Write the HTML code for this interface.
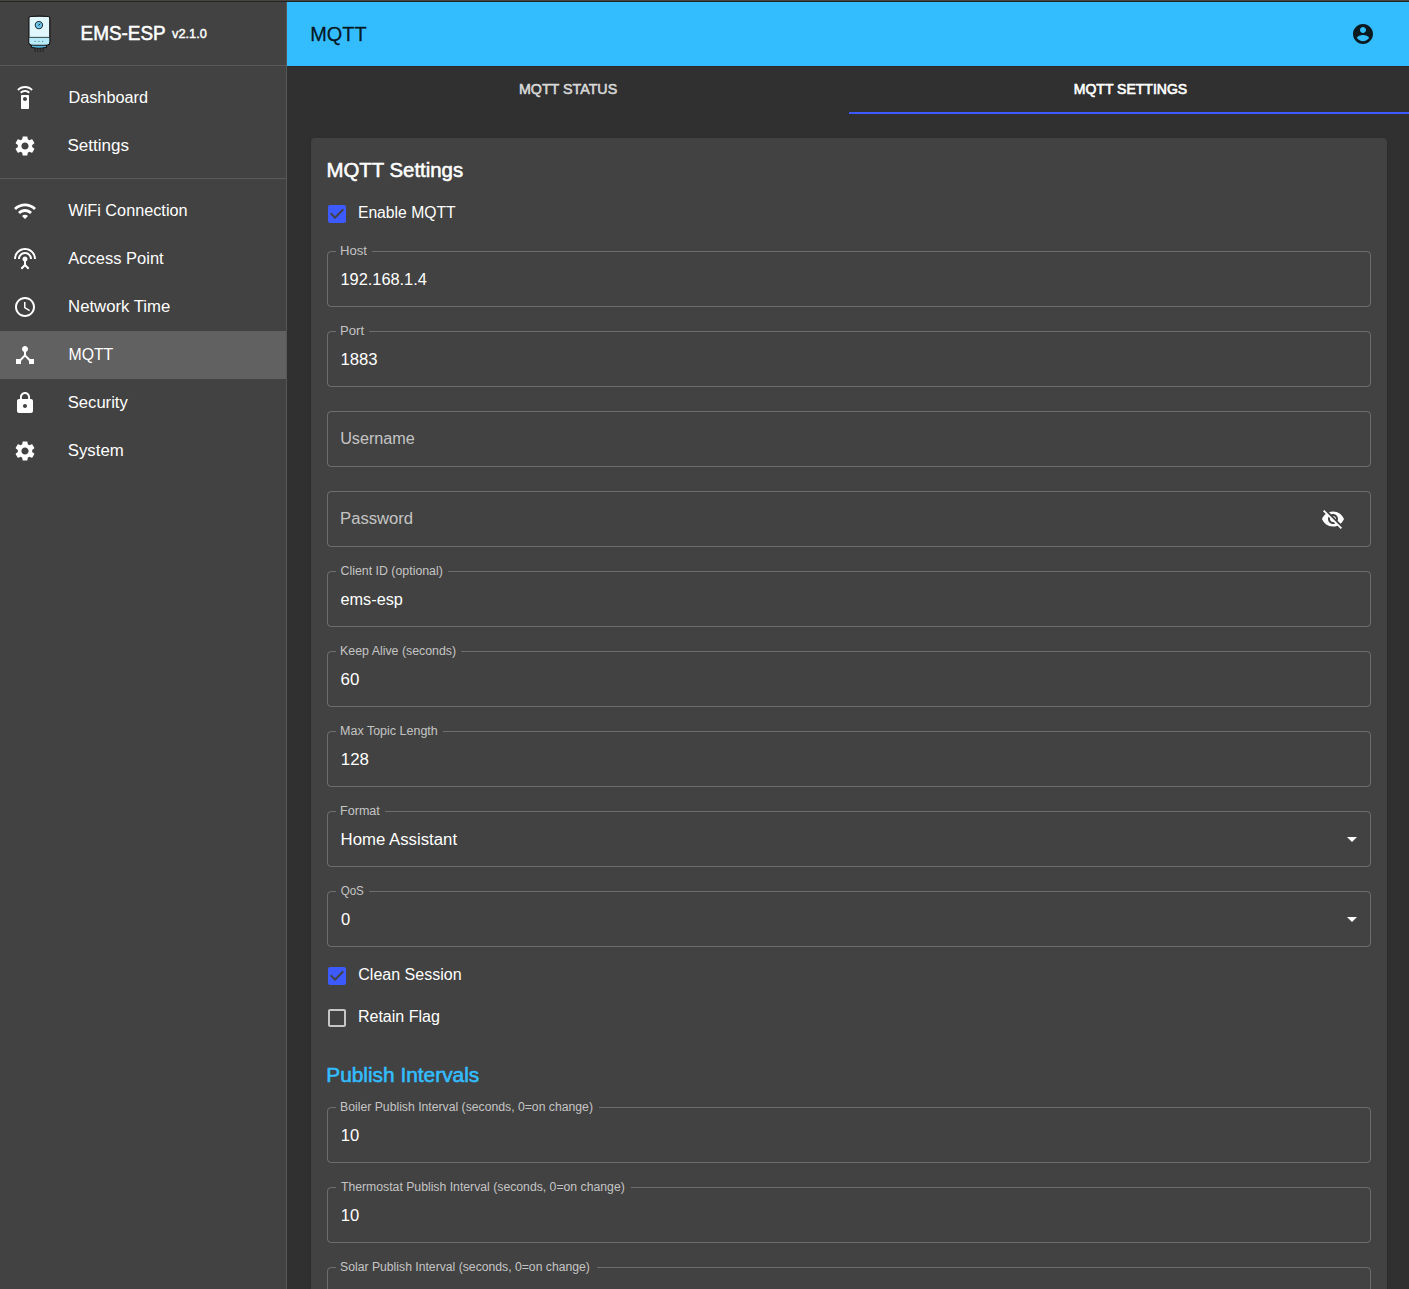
<!DOCTYPE html>
<html><head><meta charset="utf-8"><title>EMS-ESP MQTT</title>
<style>
html,body{margin:0;padding:0;}
body{width:1409px;height:1289px;overflow:hidden;position:relative;background:#303030;font-family:"Liberation Sans",sans-serif;}
.t{position:absolute;white-space:nowrap;}
.r{position:absolute;}
.i{position:absolute;display:block;}
.fld{position:absolute;box-sizing:border-box;border:1px solid rgba(255,255,255,0.23);border-radius:4px;}
</style></head><body>
<div class="r" style="left:0px;top:0px;width:1409px;height:1px;background:#46453f;"></div>
<div class="r" style="left:0px;top:1px;width:1409px;height:1px;background:#232323;"></div>
<div class="r" style="left:0px;top:2px;width:286px;height:1287px;background:#424242;"></div>
<div class="r" style="left:286px;top:2px;width:1px;height:1287px;background:#575757;"></div>
<div class="r" style="left:0px;top:65px;width:286px;height:1px;background:#595959;"></div>
<svg class="i" style="left:24px;top:12px;width:32px;height:44px" viewBox="0 0 32 44">
 <path d="M7.4 32.3 H22.4 V35.3 Q15 37.1 7.4 35.3 Z" fill="#5ab3d9" stroke="#141414" stroke-width="1.1"/>
 <rect x="10.4" y="36.2" width="1.2" height="3.7" fill="#262626"/><rect x="13" y="36.2" width="1.2" height="3.7" fill="#262626"/><rect x="15.8" y="36.2" width="1.2" height="3.7" fill="#262626"/><rect x="18.5" y="36.2" width="1.2" height="3.7" fill="#262626"/>
 <path d="M4.9 6.2 Q4.9 4.6 6.5 4.5 Q15.3 3.9 24.2 4.5 Q25.8 4.6 25.8 6.2 V30.6 Q25.8 32.6 23.8 32.8 Q15.3 33.2 6.9 32.8 Q4.9 32.6 4.9 30.6 Z" fill="#dff7fd" stroke="#141414" stroke-width="1.25"/>
 <path d="M5.55 25.9 H25.15 V30.6 Q25.15 32.1 23.7 32.2 Q15.3 32.6 7 32.2 Q5.55 32.1 5.55 30.6 Z" fill="#b5ebfa"/>
 <line x1="5.2" y1="25.4" x2="25.5" y2="25.4" stroke="#3b4b50" stroke-width="1.05"/>
 <circle cx="14.9" cy="13.1" r="3.65" fill="#74c9ec" stroke="#26353b" stroke-width="1.1"/>
 <circle cx="14.9" cy="13.1" r="2" fill="#62bde6"/>
 <line x1="14.6" y1="13.4" x2="16.2" y2="11.7" stroke="#101010" stroke-width="0.9"/>
 <rect x="10.5" y="28.9" width="1.3" height="0.9" fill="#5d7a83"/><rect x="14.3" y="28.9" width="1.3" height="0.9" fill="#5d7a83"/><rect x="17.9" y="28.9" width="1.3" height="0.9" fill="#5d7a83"/>
</svg>
<div class="t" style="left:81.7px;top:24.28px;font-size:19.4px;line-height:19px;color:#fff;font-weight:400;-webkit-text-stroke:0.53px #fff;transform:translate(-1.44px,0) scaleX(0.9749);transform-origin:1.45px 0;">EMS-ESP</div>
<div class="t" style="left:172.1px;top:27.00px;font-size:13px;line-height:13px;color:#fff;font-weight:400;-webkit-text-stroke:0.45px #fff;transform:translate(-0.00px,0) scaleX(0.9857);transform-origin:0.01px 0;">v2.1.0</div>
<svg class="i" style="left:13px;top:86px;width:24px;height:24px" viewBox="0 0 24 24"><path fill="#fff" d="M15 9H9c-.55 0-1 .45-1 1v12c0 .55.45 1 1 1h6c.55 0 1-.45 1-1V10c0-.55-.45-1-1-1zm-3 6c-1.1 0-2-.9-2-2s.9-2 2-2 2 .9 2 2-.9 2-2 2zM7.05 6.05l1.41 1.41C9.37 6.56 10.62 6 12 6s2.63.56 3.54 1.46l1.41-1.41C15.68 4.78 13.93 4 12 4s-3.68.78-4.95 2.05zM12 0C8.96 0 6.21 1.23 4.22 3.22l1.41 1.41C7.26 3.01 9.51 2 12 2s4.74 1.01 6.36 2.64l1.41-1.41C17.79 1.23 15.04 0 12 0z"/></svg>
<div class="t" style="left:69.3px;top:89.66px;font-size:16px;line-height:16px;color:#fff;font-weight:400;transform:translate(-0.53px,0) scaleX(1.0160);transform-origin:1.24px 0;">Dashboard</div>
<svg class="i" style="left:13px;top:134px;width:24px;height:24px" viewBox="0 0 24 24"><path fill="#fff" d="M19.14 12.94c.04-.3.06-.61.06-.94 0-.32-.02-.64-.07-.94l2.03-1.58c.18-.14.23-.41.12-.61l-1.92-3.32c-.12-.22-.37-.29-.59-.22l-2.39.96c-.5-.38-1.03-.7-1.62-.94l-.36-2.54c-.04-.24-.24-.41-.48-.41h-3.84c-.24 0-.43.17-.47.41l-.36 2.54c-.59.24-1.13.57-1.62.94l-2.39-.96c-.22-.08-.47 0-.59.22L2.74 8.87c-.12.21-.08.47.12.61l2.03 1.58c-.05.3-.09.63-.09.94s.02.64.07.94l-2.03 1.58c-.18.14-.23.41-.12.61l1.92 3.32c.12.22.37.29.59.22l2.39-.96c.5.38 1.03.7 1.62.94l.36 2.54c.05.24.24.41.48.41h3.84c.24 0 .44-.17.47-.41l.36-2.54c.59-.24 1.13-.56 1.62-.94l2.39.96c.22.08.47 0 .59-.22l1.92-3.32c.12-.22.07-.47-.12-.61l-2.01-1.58zM12 15.6c-1.98 0-3.6-1.62-3.6-3.6s1.62-3.6 3.6-3.6 3.6 1.62 3.6 3.6-1.62 3.6-3.6 3.6z"/></svg>
<div class="t" style="left:69.3px;top:137.66px;font-size:16px;line-height:16px;color:#fff;font-weight:400;transform:translate(-1.42px,0) scaleX(1.0636);transform-origin:0.92px 0;">Settings</div>
<svg class="i" style="left:13px;top:199px;width:24px;height:24px" viewBox="0 0 24 24"><path fill="#fff" d="M1 9l2 2c4.97-4.97 13.03-4.97 18 0l2-2C16.93 2.93 7.08 2.93 1 9zm8 8l3 3 3-3c-1.65-1.66-4.34-1.66-6 0zm-4-4l2 2c2.76-2.76 7.24-2.76 10 0l2-2C15.14 9.14 8.87 9.14 5 13z"/></svg>
<div class="t" style="left:69.3px;top:202.66px;font-size:16px;line-height:16px;color:#fff;font-weight:400;transform:translate(-0.64px,0) scaleX(1.0157);transform-origin:0.15px 0;">WiFi Connection</div>
<svg class="i" style="left:13px;top:247px;width:24px;height:24px" viewBox="0 0 24 24"><path fill="#fff" d="M12 5c-3.87 0-7 3.13-7 7h2c0-2.76 2.24-5 5-5s5 2.24 5 5h2c0-3.87-3.13-7-7-7zm1 9.29c.88-.39 1.5-1.26 1.5-2.29 0-1.38-1.12-2.5-2.5-2.5S9.5 10.62 9.5 12c0 1.02.62 1.9 1.5 2.29v3.3L7.590 21 9 22.41l3-3 3 3L16.41 21 13 17.59v-3.3zM12 1C5.93 1 1 5.930 1 12h2c0-4.97 4.03-9 9-9s9 4.03 9 9h2c0-6.07-4.93-11-11-11z"/></svg>
<div class="t" style="left:69.3px;top:250.66px;font-size:16px;line-height:16px;color:#fff;font-weight:400;transform:translate(-0.64px,0) scaleX(1.0305);transform-origin:0.15px 0;">Access Point</div>
<svg class="i" style="left:13px;top:295px;width:24px;height:24px" viewBox="0 0 24 24"><path fill="#fff" d="M11.99 2C6.47 2 2 6.48 2 12s4.47 10 9.99 10C17.52 22 22 17.52 22 12S17.52 2 11.99 2zM12 20c-4.42 0-8-3.58-8-8s3.58-8 8-8 8 3.58 8 8-3.58 8-8 8zM12.5 7H11v6l5.25 3.15.75-1.23-4.5-2.67z"/></svg>
<div class="t" style="left:69.3px;top:298.66px;font-size:16px;line-height:16px;color:#fff;font-weight:400;transform:translate(-0.83px,0) scaleX(1.0443);transform-origin:1.24px 0;">Network Time</div>
<div class="r" style="left:0px;top:331px;width:286px;height:48px;background:#616161;"></div>
<svg class="i" style="left:13px;top:343px;width:24px;height:24px" viewBox="0 0 24 24"><path fill="#fff" d="M17 16l-4-4V8.82C14.16 8.4 15 7.3 15 6c0-1.66-1.34-3-3-3S9 4.34 9 6c0 1.3.84 2.4 2 2.82V12l-4 4H3v5h5v-3.05l4-4.2 4 4.2V21h5v-5h-4z"/></svg>
<div class="t" style="left:69.3px;top:346.66px;font-size:16px;line-height:16px;color:#fff;font-weight:400;transform:translate(-0.53px,0) scaleX(0.9882);transform-origin:1.24px 0;">MQTT</div>
<svg class="i" style="left:13px;top:391px;width:24px;height:24px" viewBox="0 0 24 24"><path fill="#fff" d="M18 8h-1V6c0-2.76-2.24-5-5-5S7 3.24 7 6v2H6c-1.1 0-2 .9-2 2v10c0 1.1.9 2 2 2h12c1.1 0 2-.9 2-2V10c0-1.1-.9-2-2-2zm-6 9c-1.1 0-2-.9-2-2s.9-2 2-2 2 .9 2 2-.9 2-2 2zm3.1-9H8.9V6c0-1.71 1.39-3.1 3.1-3.1 1.71 0 3.1 1.39 3.1 3.1v2z"/></svg>
<div class="t" style="left:69.3px;top:394.66px;font-size:16px;line-height:16px;color:#fff;font-weight:400;transform:translate(-1.22px,0) scaleX(1.0386);transform-origin:0.92px 0;">Security</div>
<svg class="i" style="left:13px;top:439px;width:24px;height:24px" viewBox="0 0 24 24"><path fill="#fff" d="M19.14 12.94c.04-.3.06-.61.06-.94 0-.32-.02-.64-.07-.94l2.03-1.58c.18-.14.23-.41.12-.61l-1.92-3.32c-.12-.22-.37-.29-.59-.22l-2.39.96c-.5-.38-1.03-.7-1.62-.94l-.36-2.54c-.04-.24-.24-.41-.48-.41h-3.84c-.24 0-.43.17-.47.41l-.36 2.54c-.59.24-1.13.57-1.62.94l-2.39-.96c-.22-.08-.47 0-.59.22L2.74 8.87c-.12.21-.08.47.12.61l2.03 1.58c-.05.3-.09.63-.09.94s.02.64.07.94l-2.03 1.58c-.18.14-.23.41-.12.61l1.92 3.32c.12.22.37.29.59.22l2.39-.96c.5.38 1.03.7 1.62.94l.36 2.54c.05.24.24.41.48.41h3.84c.24 0 .44-.17.47-.41l.36-2.54c.59-.24 1.13-.56 1.62-.94l2.39.96c.22.08.47 0 .59-.22l1.92-3.32c.12-.22.07-.47-.12-.61l-2.01-1.58zM12 15.6c-1.98 0-3.6-1.62-3.6-3.6s1.62-3.6 3.6-3.6 3.6 1.62 3.6 3.6-1.62 3.6-3.6 3.6z"/></svg>
<div class="t" style="left:69.3px;top:442.66px;font-size:16px;line-height:16px;color:#fff;font-weight:400;transform:translate(-1.22px,0) scaleX(1.0496);transform-origin:0.92px 0;">System</div>
<div class="r" style="left:0px;top:178px;width:286px;height:1px;background:#595959;"></div>
<div class="r" style="left:287px;top:2px;width:1122px;height:64px;background:#33bdff;"></div>
<div class="r" style="left:287px;top:66px;width:1122px;height:1px;background:#2e2a29;"></div>
<div class="t" style="left:312px;top:24.07px;font-size:20px;line-height:20px;color:rgba(0,0,0,0.87);font-weight:400;-webkit-text-stroke:0.3px rgba(0,0,0,0.87);transform:translate(-1.77px,0) scaleX(0.9939);transform-origin:1.67px 0;">MQTT</div>
<svg class="i" style="left:1351px;top:22px;width:24px;height:24px" viewBox="0 0 24 24"><path fill="#0b1a20" d="M12 2C6.48 2 2 6.48 2 12s4.48 10 10 10 10-4.48 10-10S17.52 2 12 2zm0 3c1.66 0 3 1.34 3 3s-1.34 3-3 3-3-1.34-3-3 1.34-3 3-3zm0 14.2c-2.5 0-4.71-1.28-6-3.22.03-1.99 4-3.08 6-3.08 1.99 0 5.97 1.09 6 3.08-1.29 1.94-3.5 3.22-6 3.22z"/></svg>
<div class="t" style="left:367.5px;width:400px;text-align:center;top:82.45px;font-size:14px;line-height:14px;color:rgba(255,255,255,0.7);font-weight:400;-webkit-text-stroke:0.65px rgba(255,255,255,0.7);transform:translate(-0.81px,0) scaleX(1.0182);transform-origin:152.71px 0;">MQTT STATUS</div>
<div class="t" style="left:928.5px;width:400px;text-align:center;top:82.15px;font-size:14px;line-height:14px;color:#fff;font-weight:400;-webkit-text-stroke:0.65px #fff;transform:translate(1.42px,0) scaleX(1.0013);transform-origin:143.98px 0;">MQTT SETTINGS</div>
<div class="r" style="left:849px;top:112px;width:560px;height:2px;background:#3d5afe;"></div>
<div class="r" style="left:311px;top:138px;width:1076px;height:1200px;background:#424242;border-radius:4px;box-shadow:0px 2px 1px -1px rgba(0,0,0,0.2),0px 1px 1px 0px rgba(0,0,0,0.14),0px 1px 3px 0px rgba(0,0,0,0.12);"></div>
<div class="t" style="left:327.7px;top:160.78px;font-size:19.4px;line-height:19px;color:#fff;font-weight:400;-webkit-text-stroke:0.53px #fff;transform:translate(-1.44px,0) scaleX(1.0506);transform-origin:1.45px 0;">MQTT Settings</div>
<div class="r" style="left:328px;top:205px;width:18px;height:18px;background:#3d5afe;border-radius:2px;"></div>
<svg class="i" style="left:325px;top:202px;width:24px;height:24px" viewBox="0 0 24 24"><path fill="#424242" d="M10 17l-5-5 1.41-1.41L10 14.17l7.59-7.59L19 8l-9 9z"/></svg>
<div class="t" style="left:358.6px;top:205.16px;font-size:16px;line-height:16px;color:#fff;font-weight:400;transform:translate(-1.12px,0) scaleX(0.9818);transform-origin:1.13px 0;">Enable MQTT</div>
<div class="fld" style="left:327px;top:251px;width:1044px;height:56px;"></div>
<div class="r" style="left:336px;top:251px;width:36px;height:1px;background:#424242;"></div>
<div class="t" style="left:341px;top:244.84px;font-size:12px;line-height:12px;color:rgba(255,255,255,0.7);font-weight:400;transform:translate(-0.89px,0) scaleX(1.0905);transform-origin:1.09px 0;">Host</div>
<div class="t" style="left:341px;top:272.46px;font-size:16px;line-height:16px;color:#fff;font-weight:400;transform:translate(-0.52px,0) scaleX(1.0222);transform-origin:1.22px 0;">192.168.1.4</div>
<div class="fld" style="left:327px;top:331px;width:1044px;height:56px;"></div>
<div class="r" style="left:336px;top:331px;width:33px;height:1px;background:#424242;"></div>
<div class="t" style="left:341px;top:324.84px;font-size:12px;line-height:12px;color:rgba(255,255,255,0.7);font-weight:400;transform:translate(-0.89px,0) scaleX(1.0922);transform-origin:1.09px 0;">Port</div>
<div class="t" style="left:341px;top:352.46px;font-size:16px;line-height:16px;color:#fff;font-weight:400;transform:translate(-0.42px,0) scaleX(1.0420);transform-origin:1.22px 0;">1883</div>
<div class="fld" style="left:327px;top:411px;width:1044px;height:56px;"></div>
<div class="t" style="left:341px;top:431.46px;font-size:16px;line-height:16px;color:rgba(255,255,255,0.7);font-weight:400;transform:translate(-0.85px,0) scaleX(1.0126);transform-origin:1.25px 0;">Username</div>
<div class="fld" style="left:327px;top:491px;width:1044px;height:56px;"></div>
<div class="t" style="left:341px;top:511.46px;font-size:16px;line-height:16px;color:rgba(255,255,255,0.7);font-weight:400;transform:translate(-0.92px,0) scaleX(1.0402);transform-origin:1.32px 0;">Password</div>
<svg class="i" style="left:1321px;top:507px;width:24px;height:24px" viewBox="0 0 24 24"><path fill="#fff" d="M12 7c2.76 0 5 2.24 5 5 0 .65-.13 1.26-.36 1.83l2.92 2.92c1.51-1.26 2.7-2.89 3.43-4.75-1.73-4.39-6-7.5-11-7.5-1.4 0-2.74.25-3.98.7l2.16 2.16C10.74 7.130 11.35 7 12 7zM2 4.27l2.28 2.28.46.46C3.08 8.3 1.78 10.02 1 12c1.73 4.39 6 7.5 11 7.5 1.55 0 3.03-.3 4.38-.84l.42.42L19.73 22 21 20.73 3.27 3 2 4.27zM7.53 9.8l1.55 1.55c-.05.21-.08.43-.08.65 0 1.66 1.34 3 3 3 .22 0 .44-.03.65-.08l1.55 1.55c-.67.33-1.41.53-2.2.53-2.76 0-5-2.24-5-5 0-.79.2-1.53.53-2.2zm4.31-.78l3.15 3.15.02-.16c0-1.66-1.34-3-3-3l-.17.01z"/></svg>
<div class="fld" style="left:327px;top:571px;width:1044px;height:56px;"></div>
<div class="r" style="left:336px;top:571px;width:112px;height:1px;background:#424242;"></div>
<div class="t" style="left:341px;top:564.84px;font-size:12px;line-height:12px;color:rgba(255,255,255,0.7);font-weight:400;transform:translate(-0.38px,0) scaleX(1.0288);transform-origin:0.58px 0;">Client ID (optional)</div>
<div class="t" style="left:341px;top:592.46px;font-size:16px;line-height:16px;color:#fff;font-weight:400;transform:translate(-0.45px,0) scaleX(1.0159);transform-origin:0.65px 0;">ems-esp</div>
<div class="fld" style="left:327px;top:651px;width:1044px;height:56px;"></div>
<div class="r" style="left:336px;top:651px;width:125px;height:1px;background:#424242;"></div>
<div class="t" style="left:341px;top:644.84px;font-size:12px;line-height:12px;color:rgba(255,255,255,0.7);font-weight:400;transform:translate(-0.91px,0) scaleX(1.0297);transform-origin:1.11px 0;">Keep Alive (seconds)</div>
<div class="t" style="left:341px;top:672.46px;font-size:16px;line-height:16px;color:#fff;font-weight:400;transform:translate(-0.34px,0) scaleX(1.0561);transform-origin:1.04px 0;">60</div>
<div class="fld" style="left:327px;top:731px;width:1044px;height:56px;"></div>
<div class="r" style="left:336px;top:731px;width:107px;height:1px;background:#424242;"></div>
<div class="t" style="left:341px;top:724.84px;font-size:12px;line-height:12px;color:rgba(255,255,255,0.7);font-weight:400;transform:translate(-0.89px,0) scaleX(1.0409);transform-origin:1.09px 0;">Max Topic Length</div>
<div class="t" style="left:341px;top:752.46px;font-size:16px;line-height:16px;color:#fff;font-weight:400;transform:translate(-0.12px,0) scaleX(1.0532);transform-origin:1.22px 0;">128</div>
<div class="fld" style="left:327px;top:811px;width:1044px;height:56px;"></div>
<div class="r" style="left:336px;top:811px;width:49px;height:1px;background:#424242;"></div>
<div class="t" style="left:341px;top:804.84px;font-size:12px;line-height:12px;color:rgba(255,255,255,0.7);font-weight:400;transform:translate(-0.89px,0) scaleX(1.0466);transform-origin:1.09px 0;">Format</div>
<div class="t" style="left:341px;top:832.46px;font-size:16px;line-height:16px;color:#fff;font-weight:400;transform:translate(-0.32px,0) scaleX(1.0473);transform-origin:1.32px 0;">Home Assistant</div>
<svg class="i" style="left:1340px;top:827px;width:24px;height:24px" viewBox="0 0 24 24"><path fill="#fff" d="M7 10l5 5 5-5z"/></svg>
<div class="fld" style="left:327px;top:891px;width:1044px;height:56px;"></div>
<div class="r" style="left:336px;top:891px;width:33px;height:1px;background:#424242;"></div>
<div class="t" style="left:341px;top:884.84px;font-size:12px;line-height:12px;color:rgba(255,255,255,0.7);font-weight:400;transform:translate(-0.34px,0) scaleX(0.9639);transform-origin:0.54px 0;">QoS</div>
<div class="t" style="left:341px;top:912.46px;font-size:16px;line-height:16px;color:#fff;font-weight:400;transform:translate(-0.10px,0) scaleX(1.0364);transform-origin:0.60px 0;">0</div>
<svg class="i" style="left:1340px;top:907px;width:24px;height:24px" viewBox="0 0 24 24"><path fill="#fff" d="M7 10l5 5 5-5z"/></svg>
<div class="fld" style="left:327px;top:1107px;width:1044px;height:56px;"></div>
<div class="r" style="left:336px;top:1107px;width:263px;height:1px;background:#424242;"></div>
<div class="t" style="left:341px;top:1100.84px;font-size:12px;line-height:12px;color:rgba(255,255,255,0.7);font-weight:400;transform:translate(-0.89px,0) scaleX(1.0176);transform-origin:1.09px 0;">Boiler Publish Interval (seconds, 0=on change)</div>
<div class="t" style="left:341px;top:1128.46px;font-size:16px;line-height:16px;color:#fff;font-weight:400;transform:translate(-0.22px,0) scaleX(1.0373);transform-origin:1.22px 0;">10</div>
<div class="fld" style="left:327px;top:1187px;width:1044px;height:56px;"></div>
<div class="r" style="left:336px;top:1187px;width:295px;height:1px;background:#424242;"></div>
<div class="t" style="left:341px;top:1180.84px;font-size:12px;line-height:12px;color:rgba(255,255,255,0.7);font-weight:400;transform:translate(-0.07px,0) scaleX(1.0192);transform-origin:0.27px 0;">Thermostat Publish Interval (seconds, 0=on change)</div>
<div class="t" style="left:341px;top:1208.46px;font-size:16px;line-height:16px;color:#fff;font-weight:400;transform:translate(-0.22px,0) scaleX(1.0373);transform-origin:1.22px 0;">10</div>
<div class="fld" style="left:327px;top:1267px;width:1044px;height:56px;"></div>
<div class="r" style="left:336px;top:1267px;width:261px;height:1px;background:#424242;"></div>
<div class="t" style="left:341px;top:1260.84px;font-size:12px;line-height:12px;color:rgba(255,255,255,0.7);font-weight:400;transform:translate(-0.93px,0) scaleX(1.0164);transform-origin:1.13px 0;">Solar Publish Interval (seconds, 0=on change)</div>
<div class="r" style="left:328px;top:967px;width:18px;height:18px;background:#3d5afe;border-radius:2px;"></div>
<svg class="i" style="left:325px;top:964px;width:24px;height:24px" viewBox="0 0 24 24"><path fill="#424242" d="M10 17l-5-5 1.41-1.41L10 14.17l7.59-7.59L19 8l-9 9z"/></svg>
<div class="t" style="left:358.6px;top:967.06px;font-size:16px;line-height:16px;color:#fff;font-weight:400;transform:translate(-0.73px,0) scaleX(1.0021);transform-origin:0.74px 0;">Clean Session</div>
<svg class="i" style="left:325px;top:1006px;width:24px;height:24px" viewBox="0 0 24 24"><path fill="rgba(255,255,255,0.7)" d="M19 5v14H5V5h14m0-2H5c-1.1 0-2 .9-2 2v14c0 1.1.9 2 2 2h14c1.1 0 2-.9 2-2V5c0-1.1-.9-2-2-2z"/></svg>
<div class="t" style="left:358.6px;top:1009.06px;font-size:16px;line-height:16px;color:#fff;font-weight:400;transform:translate(-1.12px,0) scaleX(1.0028);transform-origin:1.13px 0;">Retain Flag</div>
<div class="t" style="left:327.7px;top:1065.78px;font-size:19.4px;line-height:19px;color:#33bdff;font-weight:400;-webkit-text-stroke:0.53px #33bdff;transform:translate(-1.66px,0) scaleX(1.0758);transform-origin:1.67px 0;">Publish Intervals</div>
</body></html>
